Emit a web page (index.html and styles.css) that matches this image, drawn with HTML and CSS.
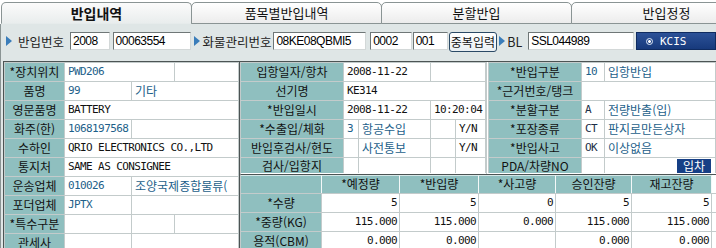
FILE: index.html
```html
<!DOCTYPE html>
<html lang="ko">
<head>
    <meta charset="UTF-8">
    <title>반입내역</title>
    <link rel="stylesheet" href="styles.css">
</head>
<body>
    <div class="tabs">
        <div class="tab active">반입내역</div>
        <div class="tab">품목별반입내역</div>
        <div class="tab">분할반입</div>
        <div class="tab">반입정정</div>
    </div>

    <div class="panel">
        <div class="search">
            <span class="cap"><svg class="tri" width="6" height="10"><polygon points="0,0 6,5 0,10" /></svg>반입번호</span>
            <span class="fld w-year">2008</span>
            <span class="fld w-seq">00063554</span>
            <span class="cap cap-cargo"><svg class="tri" width="6" height="10"><polygon points="0,0 6,5 0,10" /></svg>화물관리번호</span>
            <span class="fld w-mrn">08KE08QBMI5</span>
            <span class="fld w-msn">0002</span>
            <span class="fld w-hsn">001</span>
            <span class="btn-dup">중복입력</span>
            <span class="cap cap-bl"><svg class="tri" width="6" height="10"><polygon points="0,0 6,5 0,10" /></svg>BL</span>
            <span class="fld w-bl">SSL044989</span>
            <span class="btn-kcis"><span class="dot"></span>KCIS</span>
        </div>

        <div class="grid">
            <!-- left: 장치/화주 정보 -->
            <div class="left">
                <div class="tbl">
                    <div class="row"><div class="c lab l1">*장치위치</div><div class="c v b l12">PWD206</div><div class="c v rest"></div></div>
                    <div class="row"><div class="c lab l1">품명</div><div class="c v b l2">99</div><div class="c v ko b rest">기타</div></div>
                    <div class="row"><div class="c lab l1">영문품명</div><div class="c v rest">BATTERY</div></div>
                    <div class="row"><div class="c lab l1">화주(한)</div><div class="c v b l2">1068197568</div><div class="c v rest"></div></div>
                    <div class="row"><div class="c lab l1">수하인</div><div class="c v rest">QRIO ELECTRONICS CO.,LTD</div></div>
                    <div class="row"><div class="c lab l1">통지처</div><div class="c v rest">SAME AS CONSIGNEE</div></div>
                    <div class="row"><div class="c lab l1">운송업체</div><div class="c v b l2">010026</div><div class="c v ko b rest">조양국제종합물류(</div></div>
                    <div class="row"><div class="c lab l1">포더업체</div><div class="c v b l2">JPTX</div><div class="c v rest"></div></div>
                    <div class="row"><div class="c lab l1">*특수구분</div><div class="c v l2"></div><div class="c v l3"></div><div class="c v rest"></div></div>
                    <div class="row"><div class="c lab l1">관세사</div><div class="c v l2"></div><div class="c v rest"></div></div>
                </div>
            </div>

            <div class="main">
                <div class="upper">
                    <!-- middle: 입항/반입 -->
                    <div class="mid tbl">
                        <div class="row"><div class="c lab m1">입항일자/항차</div><div class="c v m2">2008-11-22</div><div class="c v rest"></div></div>
                        <div class="row"><div class="c lab m1">선기명</div><div class="c v rest">KE314</div></div>
                        <div class="row"><div class="c lab m1">*반입일시</div><div class="c v m2">2008-11-22</div><div class="c v rest">10:20:04</div></div>
                        <div class="row"><div class="c lab m1">*수출입/체화</div><div class="c v b mc">3</div><div class="c v ko b mn">항공수입</div><div class="c v mx"></div><div class="c v rest">Y/N</div></div>
                        <div class="row"><div class="c lab m1">반입후검사/현도</div><div class="c v mc"></div><div class="c v ko b mn">사전통보</div><div class="c v mx"></div><div class="c v rest">Y/N</div></div>
                        <div class="row last"><div class="c lab m1">검사/입항지</div><div class="c v mc"></div><div class="c v mn"></div><div class="c v mx"></div><div class="c v rest"></div></div>
                    </div>

                    <!-- right: 반입구분 -->
                    <div class="right">
                        <div class="tbl">
                            <div class="row"><div class="c lab r1">*반입구분</div><div class="c v b r2">10</div><div class="c v ko b rest">입항반입</div></div>
                            <div class="row"><div class="c lab r1">*근거번호/탱크</div><div class="c v rest"></div></div>
                            <div class="row"><div class="c lab r1">*분할구분</div><div class="c v d r2">A</div><div class="c v ko b rest">전량반출(입)</div></div>
                            <div class="row"><div class="c lab r1">*포장종류</div><div class="c v d r2">CT</div><div class="c v ko b rest">판지로만든상자</div></div>
                            <div class="row"><div class="c lab r1">*반입사고</div><div class="c v d r2">OK</div><div class="c v ko b rest">이상없음</div></div>
                            <div class="row last"><div class="c lab r1">PDA/차량NO</div><div class="c v r2"></div><div class="c v rest pda"><span class="btn-in">입차</span></div></div>
                        </div>
                    </div>
                </div>

                <!-- 수량 -->
                <div class="qty">
                    <div class="row head">
                        <div class="c lab q0"></div>
                        <div class="c lab q1">*예정량</div>
                        <div class="c lab q2">*반입량</div>
                        <div class="c lab q3">*사고량</div>
                        <div class="c lab q4">승인잔량</div>
                        <div class="c lab q5">재고잔량</div>
                    </div>
                    <div class="row">
                        <div class="c lab q0">*수량</div>
                        <div class="c v num q1">5</div>
                        <div class="c v num q2">5</div>
                        <div class="c v num q3">0</div>
                        <div class="c v num q4">5</div>
                        <div class="c v num q5">5</div>
                    </div>
                    <div class="row">
                        <div class="c lab q0">*중량(KG)</div>
                        <div class="c v num q1">115.000</div>
                        <div class="c v num q2">115.000</div>
                        <div class="c v num q3">0.000</div>
                        <div class="c v num q4">115.000</div>
                        <div class="c v num q5">115.000</div>
                    </div>
                    <div class="row">
                        <div class="c lab q0">용적(CBM)</div>
                        <div class="c v num q1">0.000</div>
                        <div class="c v num q2">0.000</div>
                        <div class="c v num q3"></div>
                        <div class="c v num q4">0.000</div>
                        <div class="c v num q5">0.000</div>
                    </div>
                </div>
            </div>
        </div>
    </div>
</body>
</html>
```

FILE: styles.css
```css
* {
    box-sizing: border-box;
}

body {
    margin: 0;
    width: 716px;
    height: 248px;
    overflow: hidden;
    background: #fff;
    font-family: "Noto Sans CJK KR", sans-serif;
    font-size: 12px;
    color: #111;
}

/* tabs */
.tabs {
    display: flex;
    height: 24px;
    padding: 2px 0 0 1px;
    background: #fff;
    overflow: hidden;
}

.tab {
    flex: none;
    width: 191px;
    height: 22px;
    line-height: 20px;
    text-align: center;
    font-size: 13px;
    background: linear-gradient(#ffffff, #ececec);
    border: 1px solid #8a9494;
    border-radius: 5px 5px 0 0;
    margin-right: -1px;
}

.tab.active {
    font-weight: bold;
    font-size: 14px;
    border-bottom-color: #e6ebeb;
    background: linear-gradient(#fbfbfb, #e9eded);
}

/* panel */
.panel {
    background: #dfe6e6;
    border-left: 1px solid #8a9494;
    height: 224px;
}

.search {
    display: flex;
    align-items: flex-start;
    height: 37px;
    padding: 8px 0 0 5px;
    overflow: hidden;
}

.cap {
    display: flex;
    align-items: center;
    height: 18px;
    white-space: nowrap;
    font-size: 12.5px;
    color: #222;
}

.tri {
    fill: #3a7dba;
    margin-right: 6px;
}

.cap-cargo {
    margin-left: 3px;
}

.cap-cargo .tri,
.cap-bl .tri {
    margin-right: 2px;
}

.cap-bl {
    width: 31px;
    margin-left: 2px;
}

.fld {
    height: 18px;
    line-height: 16px;
    padding: 0 2px;
    background: #fff;
    border: 1px solid;
    border-color: #6f7777 #d3d8d8 #d3d8d8 #6f7777;
    font-family: "Liberation Sans", sans-serif;
    font-size: 12px;
    letter-spacing: -0.5px;
    color: #000;
    white-space: nowrap;
    overflow: hidden;
}

.w-year { width: 42px; margin-left: 6px; }
.w-seq { width: 84px; margin-left: 3px; }
.w-mrn { width: 99px; margin-left: 2px; }
.w-msn { width: 44px; margin-left: 4px; }
.w-hsn { width: 37px; margin-left: 1px; }
.w-bl { width: 113px; }

.btn-dup {
    width: 52px;
    height: 20px;
    line-height: 17px;
    margin-left: 1px;
    text-align: center;
    background: linear-gradient(#ffffff, #e9eff3);
    border: 1px solid #2b4a66;
    border-radius: 3px;
    white-space: nowrap;
    font-size: 12px;
}

.btn-kcis {
    display: flex;
    align-items: center;
    flex: none;
    width: 80px;
    height: 18px;
    margin-left: 2px;
    padding-left: 9px;
    background: linear-gradient(#2c5298, #173a7c);
    border: 1px solid #0f2b60;
    color: #fff;
    font-family: "DejaVu Sans Mono", monospace;
    font-size: 11px;
}

.dot {
    width: 7px;
    height: 7px;
    margin-right: 7px;
    border: 1px solid #dfe8f5;
    border-radius: 50%;
    background: radial-gradient(circle, #fff 0 1.2px, transparent 1.6px);
}

/* data grid */
.grid {
    display: flex;
    height: 187px;
    margin-left: 2px;
    border-top: 1px solid #4c5454;
}

.left {
    width: 236px;
    border-left: 1px solid #4c5454;
    background: #fff;
}

.tbl {
    border-left: 1px solid #c3cbcb;
    border-top: 1px solid #c3cbcb;
}

.row {
    display: flex;
    height: 19px;
    border-bottom: 1px solid #c3cbcb;
}

.row.last {
    height: 15px;
    border-bottom: none;
}

.c {
    flex: none;
    height: 100%;
    line-height: 18px;
    padding: 0 3px;
    border-right: 1px solid #c3cbcb;
    white-space: nowrap;
    overflow: hidden;
}

.row.last .c {
    line-height: 15px;
}

.lab {
    padding: 0;
    text-align: center;
    background: #8fbfbf;
    color: #111;
}

.v {
    background: #fff;
    font-family: "DejaVu Sans Mono", "Noto Sans CJK KR", monospace;
    font-size: 11px;
    letter-spacing: -0.6px;
    color: #111;
}

.v.ko {
    font-family: "Noto Sans CJK KR", sans-serif;
    font-size: 12px;
    letter-spacing: 0;
}

.b { color: #1d5f8a; }
.d { color: #1c2f48; }

.rest { flex: 1; }

.l1 { width: 60px; }
.l12 { width: 110px; }
.l2 { width: 67px; }
.l3 { width: 43px; }

.main {
    flex: 1;
    border-left: 1px solid #4c5454;
    background: #fff;
}

.upper {
    display: flex;
    height: 112px;
}

.mid {
    width: 246px;
}

.m1 { width: 103px; }
.m2 { width: 87px; }
.mc { width: 15px; padding: 0 0 0 3px; }
.mn { width: 72px; }
.mx { width: 25px; }

.right {
    flex: 1;
    border-left: 1px solid #c3cbcb;
    padding-left: 1px;
}

.r1 { width: 93px; }
.r2 { width: 23px; }

.pda {
    display: flex;
    justify-content: flex-end;
    align-items: center;
    padding-right: 4px;
}

.btn-in {
    width: 34px;
    height: 14px;
    line-height: 14px;
    text-align: center;
    background: #163f85;
    color: #fff;
    font-family: "Noto Sans CJK KR", sans-serif;
    font-size: 12px;
    letter-spacing: 0;
}

/* quantities */
.qty {
    border-top: 1px solid #4c5454;
    border-left: 1px solid #c3cbcb;
}

.q0 { width: 81px; }
.q1 { width: 78px; }
.q2 { width: 79px; }
.q3 { width: 77px; }
.q4 { width: 76px; }
.q5 { width: 80px; }

.head .lab {
    border-top: 1px solid #d6e8e8;
    border-right: 1px solid #f4f8f8;
    line-height: 16px;
}

.num {
    text-align: right;
    padding-right: 2px;
}
```
